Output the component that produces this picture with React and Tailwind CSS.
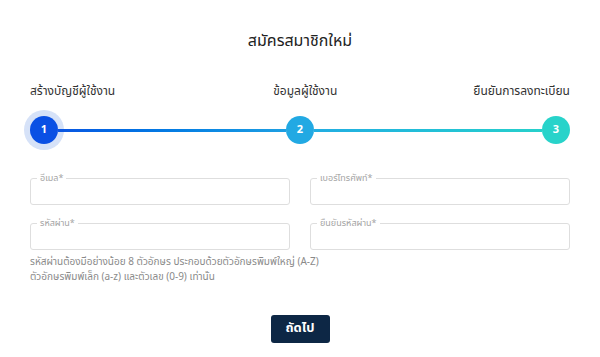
import React from "react";

const font = { fontFamily: '"Noto Sans Thai", "Noto Sans", "DejaVu Sans", sans-serif' };

const OutlinedInput = ({ label }) => (
  <div className="relative h-[27px] rounded-[3px] border border-[#dedede] bg-white">
    <span className="absolute -top-[7px] left-[6px] bg-white px-[3px] text-[9px] leading-[12px] text-[#a5a5a5]">
      {label}
    </span>
  </div>
);

const StepCircle = ({ n, className }) => (
  <div
    className={`flex h-[28px] w-[28px] shrink-0 items-center justify-center rounded-full text-[11px] font-bold text-white ${className}`}
  >
    {n}
  </div>
);

export default function App() {
  return (
    <div className="h-[357px] w-full bg-white px-[30px] pt-[29px]" style={font}>
      {/* Title */}
      <h1 className="text-center text-[16px] leading-[24px] text-[#222]">สมัครสมาชิกใหม่</h1>

      {/* Step labels */}
      <div className="mt-[29px] flex items-center justify-between text-[12px] leading-[18px] text-[#333]">
        <span>สร้างบัญชีผู้ใช้งาน</span>
        <span className="pl-[22px]">ข้อมูลผู้ใช้งาน</span>
        <span>ยืนยันการลงทะเบียน</span>
      </div>

      {/* Stepper */}
      <div className="mt-[16px] flex items-center">
        <StepCircle n="1" className="bg-[#0a50e4] ring-[6px] ring-[#d6e2f8]" />
        <div className="h-[3px] flex-1 bg-gradient-to-r from-[#0b55e2] to-[#1e9fe2]" />
        <StepCircle n="2" className="bg-[#22a9e3]" />
        <div className="h-[3px] flex-1 bg-gradient-to-r from-[#22ade2] to-[#27d0cb]" />
        <StepCircle n="3" className="bg-[#28d3ca]" />
      </div>

      {/* Form */}
      <div className="mt-[34px] grid grid-cols-2 gap-x-[20px] gap-y-[18px]">
        <OutlinedInput label="อีเมล*" />
        <OutlinedInput label="เบอร์โทรศัพท์*" />
        <OutlinedInput label="รหัสผ่าน*" />
        <OutlinedInput label="ยืนยันรหัสผ่าน*" />
      </div>
      <p className="mt-[5px] text-[10px] leading-[15px] text-[#8a8a8a]">
        รหัสผ่านต้องมีอย่างน้อย 8 ตัวอักษร ประกอบด้วยตัวอักษรพิมพ์ใหญ่ (A-Z)
        <br />
        ตัวอักษรพิมพ์เล็ก (a-z) และตัวเลข (0-9) เท่านั้น
      </p>

      {/* Next */}
      <div className="mt-[30px] flex justify-center">
        <button className="h-[28px] w-[59px] rounded-[3px] bg-[#0d2745] text-[13px] font-bold text-white">
          ถัดไป
        </button>
      </div>
    </div>
  );
}
